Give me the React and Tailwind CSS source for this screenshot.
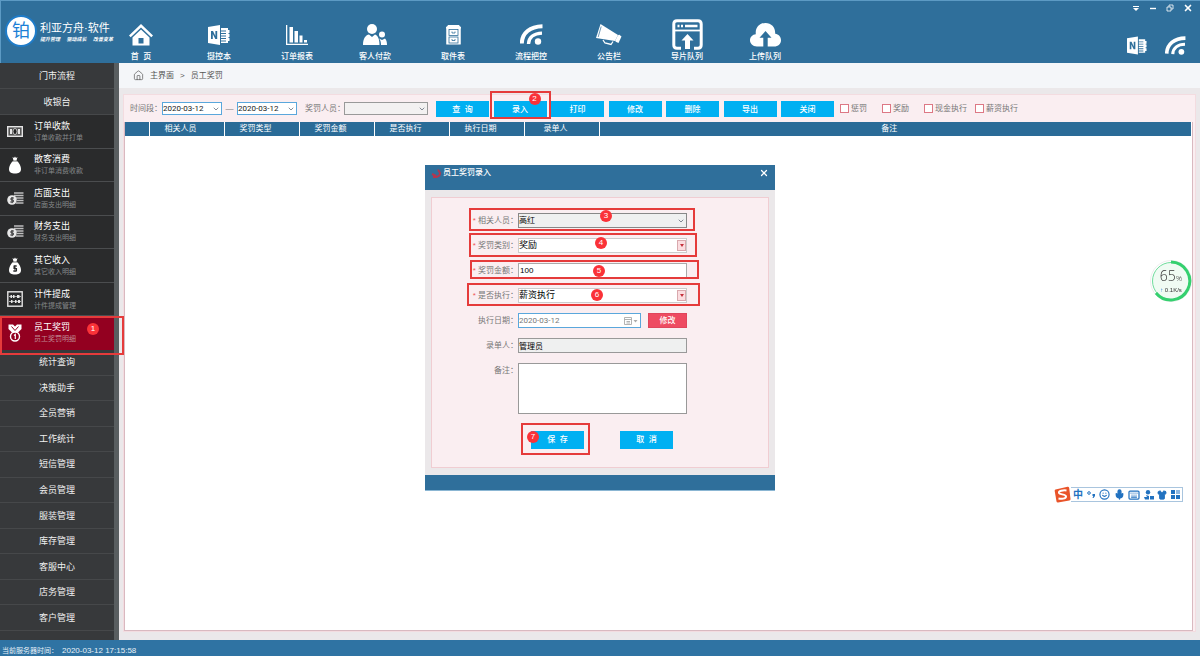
import React, { useState } from 'react';
import { ChevronDown, Home, X, Mic, Shirt, Smile, Keyboard } from 'lucide-react';

const NotebookIcon = ({ className }) => (
  <svg viewBox="0 0 22 20" className={className} fill="currentColor">
    <path fillRule="evenodd" d="M0 2 L12 0 V20 L0 18 Z M3 6 V14 H4.8 V9 L7.3 14 H9.2 V6 H7.4 V11 L5 6 Z" />
    <path d="M13 3 H20 V5 H21.5 V8 H20.500 V9 H21.500 V12 H20.500 V13 H21.500 V16 H20 V18 H13 V16.500 H18 V15.500 H13 V14 H18 V13 H13 V11.500 H18 V10.500 H13 V9 H18 V8 H13 V6.500 H18 V5.500 H13 Z" />
  </svg>
);

const FeedIcon = ({ className }) => (
  <svg viewBox="0 0 23 21" className={className} fill="none" stroke="currentColor">
    <path d="M1.800 19.500 C2 9 10 2.500 22.500 2.300" strokeWidth="4" />
    <path d="M8.500 20 C8.800 13.500 14 9.300 22 9.100" strokeWidth="3.400" />
    <circle cx="18" cy="17.500" r="3.200" fill="currentColor" stroke="none" />
  </svg>
);

const HouseIcon = () => (
  <svg viewBox="0 0 24 22" className="h-[22px] w-6" fill="currentColor">
    <path d="M12 0 L24 11.500 L22.300 13.300 L12 3.600 L1.700 13.300 L0 11.500 Z" />
    <path fillRule="evenodd" d="M12 5.500 L20.500 13.500 V21.500 H3.500 V13.500 Z M9.500 14 V19.500 H14.500 V14 Z" />
  </svg>
);

const ChartIcon = () => (
  <svg viewBox="0 0 22 20" className="h-5 w-[22px]" fill="currentColor">
    <path d="M0 0 H1.300 V18.700 H22 V20 H0 Z M3.500 2 H7 V17.500 H3.500 Z M8.500 6 H12 V17.500 H8.500 Z M13.500 10.500 H16.500 V17.500 H13.500 Z M18 15 H21 V17.500 H18 Z" />
  </svg>
);

const PeopleIcon = () => (
  <svg viewBox="0 0 24 22" className="h-[22px] w-6" fill="currentColor">
    <circle cx="9" cy="5" r="5" />
    <path d="M0 21 C0 14 3 11 6 10.500 L9 13 L12 10.500 C15 11.500 16.500 15 16.500 21 Z" />
    <circle cx="19" cy="10.500" r="3" />
    <path d="M16 14.500 L19 16 L22 14.500 C23.500 16 24 18 24 21 H18 C18 18 17.500 16 16 14.500 Z" />
  </svg>
);

const CabinetIcon = () => (
  <svg viewBox="0 0 15 20" className="h-5 w-[15px]" fill="none" stroke="currentColor">
    <path d="M0 3 L2 0.500 H13 L15 3 Z" fill="currentColor" />
    <rect x="0.800" y="3" width="13.400" height="16" fill="currentColor" />
    <g stroke="#2f6f9b" strokeWidth="0.800">
      <rect x="3" y="4.500" width="9" height="6" />
      <rect x="3" y="12" width="9" height="6" />
      <path d="M6 6.500 V8 H9 V6.500 M6 14 V15.500 H9 V14" />
    </g>
  </svg>
);

const MegaphoneIcon = () => (
  <svg viewBox="0 0 26 22" className="h-[22px] w-[26px]" fill="currentColor">
    <path d="M4.500 0 L22 11 L19 17 L0 14 Z" />
    <path d="M23 10.500 L25.500 12.500 L22.500 19 L19.800 17.800 Z" />
    <path d="M22 11 L19 17 L20.500 18 L23.500 11.500 Z" />
    <path d="M7 16 L9 19 L15 20.500 L17 17.500" fill="none" stroke="currentColor" strokeWidth="1.300" />
    <path d="M5.200 2.500 L2.200 13" stroke="#2f6f9b" strokeWidth="0.700" />
  </svg>
);

const WindowUploadIcon = () => (
  <svg viewBox="0 0 31 31" className="h-[31px] w-[31px]" fill="none" stroke="currentColor">
    <path d="M9 29.200 H5 Q1.800 29.200 1.800 26 V5 Q1.800 1.800 5 1.800 H26 Q29.200 1.800 29.200 5 V26 Q29.200 29.200 26 29.200 H22" strokeWidth="3" />
    <path d="M3 11.500 H28" strokeWidth="1.800" />
    <path d="M5.500 7 H7.500 M9 7 H11 M13 7 H25.500" strokeWidth="2.400" />
    <path d="M15.500 15 L21.500 21.500 H18 V30 H13 V21.500 H9.500 Z" fill="currentColor" stroke="none" />
  </svg>
);

const CloudUploadIcon = () => (
  <svg viewBox="0 0 31 24" className="h-6 w-[31px]" fill="currentColor">
    <path fillRule="evenodd" d="M7 23.500 C2.500 23.500 0 20.500 0 17.300 C0 14 2.500 11.500 5.800 11.200 C5 4.500 9.500 0 15.500 0 C21.500 0 25.500 4.500 25.200 10.800 C28.500 11.200 31 13.800 31 17.200 C31 20.800 28.300 23.500 24 23.500 Z M15.500 8 L9.500 14.800 H13.300 V23.500 H17.700 V14.800 H21.500 Z" />
  </svg>
);

const CashIcon = () => (
  <svg viewBox="0 0 16 11" className="h-[11px] w-4">
    <rect x="0.700" y="0.700" width="14.600" height="9.600" fill="#555" stroke="#e5e5e5" strokeWidth="1.400" />
    <path d="M3 3 H5 V8 H3 Z M11 3 H13 V8 H11 Z" fill="#e5e5e5" />
    <ellipse cx="8" cy="5.500" rx="2" ry="3" fill="#222" stroke="#e5e5e5" strokeWidth="0.800" />
  </svg>
);

const BagIcon = ({ coin }) => (
  <svg viewBox="0 0 12 18" className="h-[18px] w-3" fill="#fff">
    <path d="M3.500 1 L5 2 L6 0.500 L7 2 L8.500 1 L7.500 4.500 C10.500 7 12 10.500 12 13 C12 16.500 9.500 17.500 6 17.500 C2.500 17.500 0 16.500 0 13 C0 10.500 1.500 7 4.500 4.500 Z" />
    <path d="M4 5 H8" stroke="#2a2b2c" strokeWidth="0.700" />
    {coin && <path d="M8 9 H5 V11.500 H7.500 V14 H4 M6 8 V15" fill="none" stroke="#2a2b2c" strokeWidth="1.100" />}
  </svg>
);

const CoinsIcon = () => (
  <svg viewBox="0 0 17 13" className="h-[13px] w-[17px]">
    <path d="M7 1 H16.500 M7 3.500 H16.500 M9 6 H16.500 M10 8.500 H16.500 M9 11 H16.500" stroke="#bdbdbd" strokeWidth="1.600" />
    <circle cx="5" cy="8" r="4.800" fill="#e8e8e8" />
    <path d="M7 6 H4 V8 H6.300 V10 H3.200 M5.100 5 V11.200" fill="none" stroke="#2a2b2c" strokeWidth="0.900" />
  </svg>
);

const AbacusIcon = () => (
  <svg viewBox="0 0 16 16" className="h-4 w-4" fill="none" stroke="#e5e5e5">
    <rect x="0.800" y="0.800" width="14.400" height="14.400" strokeWidth="1.400" />
    <path d="M2 5.500 H14 M2 10.500 H14" strokeWidth="0.700" />
    <path d="M3.500 5.500 H5 M6 5.500 H7.500 M10 5.500 H12.500 M4 10.500 H5.500 M8 10.500 H9.500 M11 10.500 H13" strokeWidth="2.800" />
  </svg>
);

const MedalIcon = () => (
  <svg viewBox="0 0 14 18" className="h-[18px] w-[14px]">
    <path d="M0.500 0.500 H5 L7 2.500 L9 0.500 H13.500 V5 L9.500 9 H4.500 L0.500 5 Z" fill="#fff" />
    <path d="M3.500 2.500 L7 6.500 L10.500 2.500" fill="none" stroke="#930020" strokeWidth="1" />
    <circle cx="7" cy="12.500" r="4.500" fill="#930020" stroke="#fff" strokeWidth="1.400" />
    <path d="M6 11.500 L7.300 10.500 V15" fill="none" stroke="#fff" strokeWidth="1.200" />
  </svg>
);

const topNav = [
  { label: '首  页', icon: <HouseIcon /> },
  { label: '摄控本', icon: <NotebookIcon className="h-5 w-[22px]" /> },
  { label: '订单报表', icon: <ChartIcon /> },
  { label: '客人付款', icon: <PeopleIcon /> },
  { label: '取件表', icon: <CabinetIcon /> },
  { label: '流程把控', icon: <FeedIcon className="h-[21px] w-[23px]" /> },
  { label: '公告栏', icon: <MegaphoneIcon /> },
  { label: '导片队列', icon: <WindowUploadIcon /> },
  { label: '上传队列', icon: <CloudUploadIcon /> }
];

const cashierItems = [
  { title: '订单收款', desc: '订单收款并打单', icon: <CashIcon /> },
  { title: '散客消费', desc: '非订单消费收款', icon: <BagIcon /> },
  { title: '店面支出', desc: '店面支出明细', icon: <CoinsIcon /> },
  { title: '财务支出', desc: '财务支出明细', icon: <CoinsIcon /> },
  { title: '其它收入', desc: '其它收入明细', icon: <BagIcon coin /> },
  { title: '计件提成', desc: '计件提成管理', icon: <AbacusIcon /> },
  { title: '员工奖罚', desc: '员工奖罚明细', icon: <MedalIcon />, active: true }
];

const sections = [
  '统计查询', '决策助手', '全员营销', '工作统计', '短信管理', '会员管理',
  '服装管理', '库存管理', '客服中心', '店务管理', '客户管理'
];

const actions = ['查  询', '录入', '打印', '修改', '删除', '导出', '关闭'];
const columns = ['相关人员', '奖罚类型', '奖罚金额', '是否执行', '执行日期', '录单人'];
const filters = ['惩罚', '奖励', '现金执行', '薪资执行'];

// numbered step: red frame with a round badge on it
const Step = ({ n, box, badge }) => (
  <span className={`pointer-events-none absolute z-10 border-2 border-[#e53b3b] ${box}`}>
    <span className={`absolute flex h-3 w-3 items-center justify-center rounded-full bg-[#fa3238] text-[8px] leading-none text-white ${badge}`}>
      {n}
    </span>
  </span>
);

const Select = ({ id, label, options, className, arrow = 'plain' }) => (
  <span className="relative flex">
    <select
      id={id}
      aria-label={label}
      className={`appearance-none rounded-none border outline-none ${className}`}
    >
      {options.map((o) => <option key={o}>{o}</option>)}
    </select>
    {arrow === 'plain' ? (
      <ChevronDown size={8} className="pointer-events-none absolute top-1/2 right-[2px] -translate-y-1/2 text-gray-600" />
    ) : (
      <span className="pointer-events-none absolute top-[2px] right-px flex h-[11px] w-[9px] items-center justify-center border border-[#d9a9ae] bg-[#fbdde0]">
        <svg viewBox="0 0 4 3" className="h-[3px] w-1"><path d="M0 0 H4 L2 3 Z" fill="#c4313c" /></svg>
      </span>
    )}
  </span>
);

const SectionRow = ({ children }) => (
  <a href="#" className="flex items-center justify-center border-b border-[#46484a] text-[9px] leading-3 text-[#f0f0f0]">
    {children}
  </a>
);

const Header = () => (
  <header className="flex h-[63px] border-t border-l border-[#5c9ac4] bg-[#2f6f9b] text-white">
    <div className="flex w-[101px] shrink-0 gap-[3px] pl-1">
      <div className="mt-[14px] flex h-8 w-8 shrink-0 items-center justify-center rounded-full border-2 border-[#1f7cc9] bg-white text-[18px] leading-none text-[#1c7fd6]">
        铂
      </div>
      <div className="mt-5 w-[73px] shrink-0">
        <div className="text-[11px] leading-[14px] whitespace-nowrap">利亚方舟·软件</div>
        <div className="flex justify-between text-[5px] leading-[8px] font-bold italic">
          <span>提升管理</span>
          <span>驱动成长</span>
          <span>改善变革</span>
        </div>
      </div>
    </div>
    <nav className="flex">
      {topNav.map((item) => (
        <a key={item.label} href="#" className="flex w-[78px] flex-col items-center pt-[18px]">
          <span className="flex h-[31px] items-center">{item.icon}</span>
          <span className="text-[8px] leading-[13px] font-medium whitespace-pre">{item.label}</span>
        </a>
      ))}
    </nav>
    <div className="ml-auto flex flex-col items-end">
      <div className="flex items-center gap-[9px] pt-[2px] pr-[7px]">
        <button aria-label="菜单">
          <svg viewBox="0 0 8 8" className="h-2 w-2"><path d="M1 2.500 H7" stroke="#fff" /><path d="M1 4 H7 L4 7 Z" fill="#fff" /></svg>
        </button>
        <button aria-label="最小化">
          <svg viewBox="0 0 8 8" className="h-2 w-2"><path d="M1 4.500 H7" stroke="#fff" strokeWidth="1.400" /></svg>
        </button>
        <button aria-label="还原">
          <svg viewBox="0 0 8 8" className="h-2 w-2" fill="none" stroke="#fff" strokeWidth="0.800"><path d="M1 3 H5 V7 H1 Z M3 3 V1 H7 V5 H5" /></svg>
        </button>
        <button aria-label="关闭">
          <X size={10} strokeWidth={4} />
        </button>
      </div>
      <div className="flex items-center gap-[18px] pt-[23px] pr-[14px]">
        <NotebookIcon className="h-[19px] w-5" />
        <FeedIcon className="h-[19px] w-[21px]" />
      </div>
    </div>
  </header>
);

const Sidebar = () => (
  <aside className="flex w-[119px] shrink-0 flex-col border-r-[5px] border-[#595e60] bg-[#37393b]">
    <div className="grid h-[52px] auto-rows-fr">
      <SectionRow>门市流程</SectionRow>
      <SectionRow>收银台</SectionRow>
    </div>
    <div className="grid h-[235px] auto-rows-fr bg-[#2a2b2c]">
      {cashierItems.map((item) => (
        <a
          key={item.title}
          href="#"
          className={`relative flex items-center border-b ${item.active ? 'border-[#930020] bg-[#930020]' : 'border-[#4b4d4f]'}`}
        >
          <span className="flex w-[30px] justify-center">{item.icon}</span>
          <span className="pl-1">
            <span className="block text-[9px] leading-3 text-white">{item.title}</span>
            <span className={`block text-[7px] leading-[11px] ${item.active ? 'text-[#c08a94]' : 'text-[#85888a]'}`}>{item.desc}</span>
          </span>
          {item.active && (
            <Step n={1} box="top-0 left-0 h-[39px] w-[124px]" badge="top-[5px] left-[85px]" />
          )}
        </a>
      ))}
    </div>
    <div className="grid h-[281px] auto-rows-fr">
      {sections.map((s) => <SectionRow key={s}>{s}</SectionRow>)}
    </div>
  </aside>
);

const FilterBar = () => (
  <div className="flex h-[27px] items-center pl-[6px] text-[8px] text-[#777]">
    <label htmlFor="from" className="w-8 whitespace-nowrap">时间段：</label>
    <Select id="from" options={['2020-03-12']} className="h-[13px] w-[60px] border-[#5aa7dc] bg-white font-['Roboto',sans-serif] text-[#222]" />
    <span className="w-[15px] text-center">—</span>
    <Select id="to" label="结束日期" options={['2020-03-12']} className="h-[13px] w-[60px] border-[#5aa7dc] bg-white font-['Roboto',sans-serif] text-[#222]" />
    <label htmlFor="person" className="w-[47px] pl-2 whitespace-nowrap">奖罚人员：</label>
    <Select id="person" options={['']} className="h-[13px] w-[84px] border-[#999] bg-[#f3f1f1]" />
    <div className="ml-2 flex w-[398px] shrink-0 justify-between">
      {actions.map((a) => (
        <span key={a} className="relative">
          <button className="block h-4 w-[53px] bg-[#00b0f2] text-[8px] leading-[17px] font-medium whitespace-pre text-white">{a}</button>
          {a === '录入' && (
            <Step n={2} box="-top-[10px] -left-1 h-7 w-[61px]" badge="top-0 left-[37px]" />
          )}
        </span>
      ))}
    </div>
    <div className="ml-[6px] grid grid-cols-[42px_42px_51px_auto]">
      {filters.map((f) => (
        <label key={f} className="flex items-center gap-[2px] whitespace-nowrap">
          <input type="checkbox" className="h-[9px] w-[9px] appearance-none border border-[#dd7885] bg-white checked:bg-[#dd7885]" />
          {f}
        </label>
      ))}
    </div>
  </div>
);

const Row = ({ id, label, required, children }) => (
  <div className="relative grid grid-cols-[86px_169px] items-start">
    <label htmlFor={id} className="text-right text-[8px] leading-4 whitespace-nowrap text-[#777]">
      {required && <span className="text-[#e55]">* </span>}
      {label}：
    </label>
    {children}
  </div>
);

const Dialog = ({ onClose }) => {
  const [amount, setAmount] = useState('100');

  return (
    <div className="pointer-events-none fixed inset-0 z-20 flex items-center justify-center">
      <section role="dialog" aria-label="员工奖罚录入" className="pointer-events-auto w-[350px] bg-[#ebe8ea]">
        <div className="flex h-[25px] items-start bg-[#2f6f9b] px-[6px] pt-[2px] text-white">
          <svg viewBox="0 0 12 12" className="h-3 w-3">
            <path d="M2 10 C6 10.500 9 9 9 6.500 C9 4 7 5 7.500 2.500 M1 7 L5 9" fill="none" stroke="#b3364f" strokeWidth="2" />
          </svg>
          <h2 className="text-[8px] leading-3 font-medium">员工奖罚录入</h2>
          <button aria-label="关闭窗口" onClick={onClose} className="ml-auto pt-px">
            <X size={10} strokeWidth={3} />
          </button>
        </div>
        <form className="mx-[6px] my-[7px] border border-[#f0cdd2] bg-[#faeef1] pt-[15px] pb-[18px]" onSubmit={(e) => e.preventDefault()}>
          <div className="flex flex-col gap-[9px]">
            <Row id="staff" label="相关人员" required>
              <Select id="staff" options={['高红']} className="h-[15px] w-[169px] border-[#888] bg-[#eff0f0] text-[8px] text-black" />
              <Step n={3} box="-top-[5px] left-[37px] h-[23px] w-[226px]" badge="top-0 left-[129px]" />
            </Row>
            <Row id="kind" label="奖罚类别" required>
              <Select id="kind" arrow="red" options={['奖励', '惩罚']} className="h-[15px] w-[169px] border-[#ccc] bg-white text-[9px] text-black" />
              <Step n={4} box="-top-[5px] left-[37px] h-6 w-[228px]" badge="top-[2px] left-[124px]" />
            </Row>
            <Row id="amount" label="奖罚金额" required>
              <input
                id="amount"
                value={amount}
                onChange={(e) => setAmount(e.target.value)}
                className="h-[15px] w-[169px] border border-[#aaa] bg-white pl-px text-[8px] text-black outline-none"
              />
              <Step n={5} box="-top-[3px] left-[38px] h-[19px] w-[229px]" badge="top-[3px] left-[121px]" />
            </Row>
            <Row id="exec" label="是否执行" required>
              <Select id="exec" arrow="red" options={['薪资执行', '现金执行']} className="h-[15px] w-[169px] border-[#ccc] bg-white text-[9px] text-black" />
              <Step n={6} box="-top-[5px] left-[35px] h-[23px] w-[233px]" badge="top-[4px] left-[122px]" />
            </Row>
            <Row id="date" label="执行日期">
              <div className="flex justify-between">
                <span className="relative flex">
                  <input id="date" readOnly value="2020-03-12" className="h-[15px] w-[123px] border border-[#5aa7dc] bg-white font-['Roboto',sans-serif] text-[8px] text-[#777] outline-none" />
                  <svg viewBox="0 0 14 8" className="absolute top-1 right-[3px] h-2 w-[14px]" fill="none" stroke="#aaa" strokeWidth="0.900">
                    <path d="M0.500 0.500 H7.500 V7.500 H0.500 Z M0.500 2.500 H7.500 M2.500 4.500 H6 M2.500 6 H6" />
                    <path d="M9.500 3 H13.500 L11.500 5.500 Z" fill="#aaa" stroke="none" />
                  </svg>
                </span>
                <button type="button" className="h-[15px] w-[39px] border border-[#e0455c] bg-[#ee4b62] text-[8px] leading-3 font-medium text-white">修改</button>
              </div>
            </Row>
            <Row id="operator" label="录单人">
              <input id="operator" readOnly value="管理员" className="h-[15px] w-[169px] border border-[#999] bg-[#eff0f0] text-[8px] text-black outline-none" />
            </Row>
            <Row id="remark" label="备注">
              <textarea id="remark" className="block h-[51px] w-[169px] resize-none border border-[#999] bg-white p-px text-[8px] outline-none" />
            </Row>
          </div>
          <div className="mt-[17px] ml-[99px] flex gap-9">
            <span className="relative">
              <button className="block h-[18px] w-[53px] bg-[#00b0f2] text-[8px] leading-[18px] font-medium whitespace-pre text-white">保  存</button>
              <Step n={7} box="-top-2 -left-[10px] h-8 w-[69px]" badge="top-[6px] left-[4px]" />
            </span>
            <button type="button" onClick={onClose} className="block h-[18px] w-[53px] bg-[#00b0f2] text-[8px] leading-[18px] font-medium whitespace-pre text-white">取  消</button>
          </div>
        </form>
        <div className="h-4 border-b border-[#8bb6d3] bg-[#2f6f9b]" />
      </section>
    </div>
  );
};

const SpeedBall = () => (
  <div className="fixed top-[260px] right-[8px] z-30 flex h-[42px] w-[42px] flex-col items-center justify-center rounded-full bg-white">
    <svg viewBox="0 0 42 42" className="absolute inset-0 h-full w-full" fill="none">
      <circle cx="21" cy="21" r="20.500" stroke="#eeeeee" strokeWidth="1" />
      <circle cx="21" cy="21" r="18.500" fill="#f0fbf3" stroke="#6fdc9c" strokeWidth="1" />
      <path d="M21 2 A19 19 0 1 1 6 33" stroke="#35d06f" strokeWidth="3" />
    </svg>
    <span className="relative font-['Open_Sans',sans-serif] text-[14px] leading-4 font-light text-[#333]">
      65<span className="text-[8px]">%</span>
    </span>
    <span className="relative text-[6px] leading-[9px] text-[#333]">
      <span className="font-bold text-[#2a78d0]">↑</span> 0.1K/s
    </span>
  </div>
);

const ImeBar = () => (
  <div className="fixed right-[17px] bottom-[153px] z-30 flex items-center text-[#2272c0]">
    <svg viewBox="0 0 17 17" className="h-[17px] w-[17px]">
      <path d="M1.500 3.500 L13.500 0.800 Q15 0.600 15.200 2 L16.500 13 Q16.600 14.300 15.300 14.600 L4 16.600 Q2.800 16.700 2.500 15.500 L0.700 5 Q0.500 3.800 1.500 3.500 Z" fill="#e9542a" />
      <path d="M12.500 4.500 C9 4 4.500 5 5 7 C5.500 8.800 12 8 12 10.500 C12 13 7 13 4.500 12.500" fill="none" stroke="#fff" strokeWidth="2" />
    </svg>
    <div className="flex h-[15px] w-[112px] items-center justify-between border border-l-0 border-[#a9c5de] bg-white px-[2px]">
      <button className="text-[10px] leading-none font-bold">中</button>
      <button aria-label="标点">
        <svg viewBox="0 0 9 9" className="h-[9px] w-[9px]"><circle cx="2" cy="3" r="1.300" fill="none" stroke="currentColor" /><path d="M5.500 4 H8 V6 L6.500 8 H5.500 L6.300 6 H5.500 Z" fill="currentColor" /></svg>
      </button>
      <button aria-label="表情"><Smile size={11} strokeWidth={2.5} /></button>
      <button aria-label="语音"><Mic size={11} strokeWidth={3} fill="currentColor" /></button>
      <button aria-label="键盘"><Keyboard size={12} strokeWidth={2.5} /></button>
      <button aria-label="用户">
        <svg viewBox="0 0 10 10" className="h-[10px] w-[10px]" fill="currentColor"><circle cx="4" cy="2.300" r="2.200" /><path d="M0 7 H3 L2 5 L5 6 V9.500 H1 Z M6 6 H10 V9.500 H6 Z" /></svg>
      </button>
      <button aria-label="皮肤"><Shirt size={10} fill="currentColor" /></button>
      <button aria-label="工具箱">
        <svg viewBox="0 0 9 9" className="h-[9px] w-[9px]" fill="currentColor"><path d="M0 0 H4 V4 H0 Z M0 5 H4 V9 H0 Z M5 5 H9 V9 H5 Z M5 0.500 H9 V1.500 H5 Z M5 2.500 H9 V3.500 H5 Z" /></svg>
      </button>
    </div>
  </div>
);

const App = () => {
  const [open, setOpen] = useState(true);

  return (
    <div className="flex min-h-screen flex-col bg-[#ebe8ea] font-['Liberation_Sans','Noto_Sans_CJK_SC',sans-serif]">
      <Header />
      <div className="flex flex-1">
        <Sidebar />
        <main className="flex min-w-0 flex-1 flex-col">
          <div className="flex h-[25px] items-center gap-[6px] bg-[#f4f6f9] pl-[14px] text-[8px] text-[#555]">
            <Home size={11} strokeWidth={1.5} />
            <a href="#">主界面</a>
            <span>&gt;</span>
            <span>员工奖罚</span>
          </div>
          <div className="mx-1 mt-[6px] mb-2 flex flex-1 flex-col border border-[#f3dce0] bg-[#faeef1] pr-[2px]">
            <FilterBar />
            <div className="flex-1 border border-t-0 border-[#d9b9c0] bg-white pr-px">
              <table className="w-full table-fixed text-[8px] text-white">
                <thead>
                  <tr className="h-[14px] bg-[#2a6b97]">
                    <th className="w-6 border-r border-white" />
                    {columns.map((c) => (
                      <th key={c} className="w-[75px] border-r border-white p-0 pr-3 leading-[14px] font-normal">{c}</th>
                    ))}
                    <th className="p-0 pr-3 leading-[14px] font-normal">备注</th>
                  </tr>
                </thead>
                <tbody />
              </table>
            </div>
          </div>
        </main>
      </div>
      <footer className="flex h-4 gap-1 bg-[#2f73a3] pl-[2px] leading-[21px] text-[#e8f1f8]">
        <span className="text-[7px]">当前服务器时间：</span>
        <span className="text-[8px]">2020-03-12 17:15:58</span>
      </footer>
      {open && <Dialog onClose={() => setOpen(false)} />}
      <SpeedBall />
      <ImeBar />
    </div>
  );
};

export default App;
